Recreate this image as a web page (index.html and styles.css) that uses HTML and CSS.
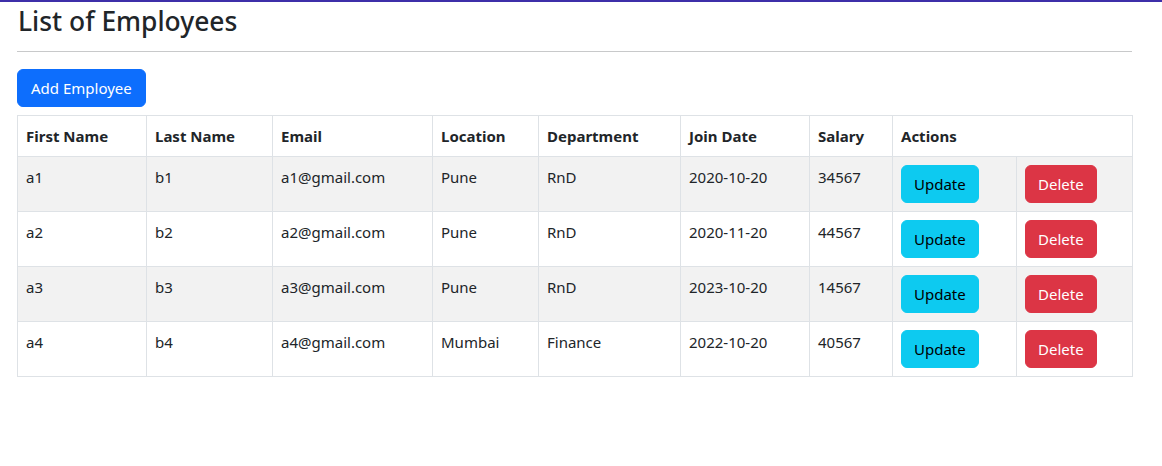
FILE: index.html
```html
<!DOCTYPE html>
<html>
<head>
<meta charset="utf-8">
<link rel="stylesheet" href="styles.css">
</head>
<body>
<div class="page">
  <h2 class="title">List of Employees</h2>
  <hr class="rule">
  <div class="toolbar"><button class="btn btn-primary">Add Employee</button></div>
  <table class="emp-table">
    <colgroup>
      <col class="c1"><col class="c2"><col class="c3"><col class="c4"><col class="c5"><col class="c6"><col class="c7"><col class="c8"><col class="c9">
    </colgroup>
    <thead>
      <tr><th>First Name</th><th>Last Name</th><th>Email</th><th>Location</th><th>Department</th><th>Join Date</th><th>Salary</th><th colspan="2">Actions</th></tr>
    </thead>
    <tbody>
      <tr class="odd"><td>a1</td><td>b1</td><td>a1@gmail.com</td><td>Pune</td><td>RnD</td><td>2020-10-20</td><td>34567</td><td><button class="btn btn-info">Update</button></td><td><button class="btn btn-danger">Delete</button></td></tr>
      <tr><td>a2</td><td>b2</td><td>a2@gmail.com</td><td>Pune</td><td>RnD</td><td>2020-11-20</td><td>44567</td><td><button class="btn btn-info">Update</button></td><td><button class="btn btn-danger">Delete</button></td></tr>
      <tr class="odd"><td>a3</td><td>b3</td><td>a3@gmail.com</td><td>Pune</td><td>RnD</td><td>2023-10-20</td><td>14567</td><td><button class="btn btn-info">Update</button></td><td><button class="btn btn-danger">Delete</button></td></tr>
      <tr><td>a4</td><td>b4</td><td>a4@gmail.com</td><td>Mumbai</td><td>Finance</td><td>2022-10-20</td><td>40567</td><td><button class="btn btn-info">Update</button></td><td><button class="btn btn-danger">Delete</button></td></tr>
    </tbody>
  </table>
</div>
</body>
</html>
```

FILE: styles.css
```css
html, body {
  margin: 0;
  padding: 0;
  background: #fff;
}
body {
  border-top: 2px solid #3d2fa9;
  font-family: "Noto Sans", "Open Sans", sans-serif;
  font-size: 15px;
  line-height: 1.5;
  color: #212529;
}
.page {
  padding: 0 30px 0 17px;
  display: flex;
  flex-direction: column;
}
.title {
  margin: 2px 0 0 1px;
  font-size: 26.4px;
  font-weight: 500;
  line-height: 34px;
  color: #212529;
}
.rule {
  margin: 13px 0 0 0;
  border: 0;
  border-top: 1px solid #c8c9ca;
  height: 0;
}
.toolbar {
  margin-top: 17px;
  display: flex;
}
.btn {
  font-family: inherit;
  font-size: 15px;
  line-height: 24px;
  padding: 6px 12px;
  border: 1px solid transparent;
  border-radius: 6px;
  cursor: pointer;
  display: inline-block;
}
.btn-primary {
  background: #0d6efd;
  border-color: #0d6efd;
  color: #fff;
  padding: 6px 13px;
}
.btn-info {
  background: #0dcaf0;
  border-color: #0dcaf0;
  color: #000;
}
.btn-danger {
  background: #dc3545;
  border-color: #dc3545;
  color: #fff;
}
.emp-table {
  margin-top: 8px;
  width: 1115px;
  border-collapse: collapse;
  table-layout: fixed;
  border: 1px solid #dee2e6;
}
.c1 { width: 129px; }
.c2 { width: 126px; }
.c3 { width: 160px; }
.c4 { width: 106px; }
.c5 { width: 142px; }
.c6 { width: 129px; }
.c7 { width: 83px; }
.c8 { width: 124px; }
.c9 { width: 116px; }
.emp-table th,
.emp-table td {
  border: 1px solid #dee2e6;
  padding: 8px 8px;
  text-align: left;
  vertical-align: top;
  line-height: 24px;
  white-space: nowrap;
}
.emp-table th {
  font-weight: 700;
}
.emp-table tr.odd td {
  background: #f2f2f2;
}
```
